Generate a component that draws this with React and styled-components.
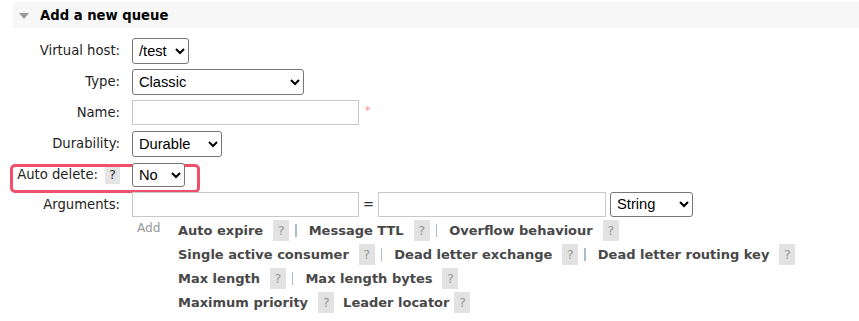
import React from 'react'
import styled, { createGlobalStyle } from 'styled-components'

const GlobalStyle = createGlobalStyle`
    html, body {
        margin: 0;
        padding: 0;
        background: #fff;
    }
    body {
        font-family: "DejaVu Sans", Verdana, sans-serif;
        font-size: 13.2px;
        color: #222;
    }
`

const Section = styled.div`
    padding-top: 2px;
`

const SectionHeader = styled.div`
    margin-left: 13px;
    height: 26px;
    background: #f7f7f7;
    display: flex;
    align-items: center;
    gap: 11px;
    padding-left: 6px;
`

const Triangle = styled.span`
    width: 0;
    height: 0;
    border-left: 5.5px solid transparent;
    border-right: 5.5px solid transparent;
    border-top: 6px solid #999;
    margin-top: 2px;
`

const Title = styled.h2`
    margin: 0;
    font-size: 13.2px;
    font-weight: bold;
    color: #000;
`

const Form = styled.div`
    margin-top: 7px;
    display: grid;
    grid-template-columns: 120px 1fr;
    grid-template-rows: repeat(5, 31px) 28px auto;
    column-gap: 12px;
    align-items: center;
`

const Label = styled.label`
    position: relative;
    display: flex;
    justify-content: flex-end;
    align-items: center;
    gap: 7px;
    white-space: nowrap;
`

const Cell = styled.div`
    position: relative;
    display: flex;
    align-items: center;
`

const Select = styled.select`
    width: ${p => p.$w}px;
    height: ${p => p.$h || 26}px;
    margin-left: ${p => p.$ml || 0}px;
    font-family: "Liberation Sans", Arial, sans-serif;
    font-size: 14.67px;
    color: #000;
    background: #fff;
    border: 1px solid #767676;
    border-radius: 3px;
    padding: 0 2px;
`

const TextInput = styled.input`
    box-sizing: border-box;
    width: ${p => p.$w}px;
    height: 25px;
    border: 1px solid #c8c8c8;
    border-radius: 0;
    padding: 0 4px;
    font-family: "Liberation Sans", Arial, sans-serif;
    font-size: 14.67px;
    background: #fff;
`

const Mandatory = styled.span`
    color: #f88;
    font-size: 11px;
    margin-left: 6px;
    align-self: flex-start;
    margin-top: 4px;
`

const Equals = styled.span`
    margin: 0 4px 0 4px;
    color: #333;
`

const Help = styled.span`
    display: inline-flex;
    align-items: center;
    justify-content: center;
    width: ${p => (p.$dark ? 15 : 16)}px;
    height: ${p => (p.$dark ? 18 : 21)}px;
    background: ${p => (p.$dark ? '#e4e4e4' : '#e2e2e2')};
    color: ${p => (p.$dark ? '#333' : '#999')};
    font-weight: normal;
    font-size: 13px;
    margin-left: ${p => p.$ml ?? 10}px;
`

const Callout = styled.span`
    position: absolute;
    left: 10px;
    top: -2px;
    width: 184px;
    height: 23px;
    border: 3px solid #f0506a;
    border-radius: 5px;
    pointer-events: none;
`

const AddRow = styled.div`
    grid-column: 2;
    display: flex;
    align-items: flex-start;
`

const AddText = styled.span`
    width: 46px;
    padding-left: 5px;
    box-sizing: border-box;
    color: #999;
    font-size: 12.1px;
    line-height: 20px;
`

const HelpLines = styled.div`
    display: flex;
    flex-direction: column;
`

const HelpLine = styled.div`
    display: flex;
    align-items: center;
    height: 24px;
`

const ArgLink = styled.span`
    font-weight: bold;
    font-size: 13px;
    color: #484848;
    white-space: nowrap;
    margin-left: ${p => p.$ml ?? 0}px;
`

const Sep = styled.span`
    width: 1.5px;
    height: 13px;
    background: #aabbd0;
    margin: 0 12px 0 6px;
`

const lines = [
    [
        { t: 'Auto expire', sep: true },
        { t: 'Message TTL', sep: true },
        { t: 'Overflow behaviour' },
    ],
    [
        { t: 'Single active consumer', sep: true },
        { t: 'Dead letter exchange', sep: true },
        { t: 'Dead letter routing key' },
    ],
    [
        { t: 'Max length', sep: true },
        { t: 'Max length bytes' },
    ],
    [
        { t: 'Maximum priority' },
        { t: 'Leader locator', ml: 9, hm: 5 },
    ],
]

const App = () => {
    return (
        <>
            <GlobalStyle />
            <Section>
                <SectionHeader>
                    <Triangle />
                    <Title>Add a new queue</Title>
                </SectionHeader>
                <Form>
                    <Label>Virtual host:</Label>
                    <Cell>
                        <Select $w={57} defaultValue="/test">
                            <option>/</option>
                            <option>/test</option>
                        </Select>
                    </Cell>

                    <Label>Type:</Label>
                    <Cell>
                        <Select $w={172} defaultValue="Classic">
                            <option>Classic</option>
                            <option>Quorum</option>
                            <option>Stream</option>
                        </Select>
                    </Cell>

                    <Label>Name:</Label>
                    <Cell>
                        <TextInput type="text" $w={227} />
                        <Mandatory>*</Mandatory>
                    </Cell>

                    <Label>Durability:</Label>
                    <Cell>
                        <Select $w={90} defaultValue="Durable">
                            <option>Durable</option>
                            <option>Transient</option>
                        </Select>
                    </Cell>

                    <Label>
                        <Callout />
                        Auto delete:
                        <Help $dark $ml={0}>?</Help>
                    </Label>
                    <Cell>
                        <Select $w={53} $h={24} defaultValue="No">
                            <option>No</option>
                            <option>Yes</option>
                        </Select>
                    </Cell>

                    <Label>Arguments:</Label>
                    <Cell>
                        <TextInput type="text" $w={227} />
                        <Equals>=</Equals>
                        <TextInput type="text" $w={228} />
                        <Select $w={83} $h={25} $ml={4} defaultValue="String">
                            <option>String</option>
                            <option>Number</option>
                            <option>Boolean</option>
                            <option>List</option>
                        </Select>
                    </Cell>

                    <AddRow>
                        <AddText>Add</AddText>
                        <HelpLines>
                            {lines.map((line, i) => (
                                <HelpLine key={i}>
                                    {line.map((item, j) => (
                                        <React.Fragment key={j}>
                                            <ArgLink $ml={j > 0 && !line[j - 1].sep ? item.ml ?? 9 : 0}>{item.t}</ArgLink>
                                            <Help $ml={item.hm}>?</Help>
                                            {item.sep && <Sep />}
                                        </React.Fragment>
                                    ))}
                                </HelpLine>
                            ))}
                        </HelpLines>
                    </AddRow>
                </Form>
            </Section>
        </>
    )
}

export default App
